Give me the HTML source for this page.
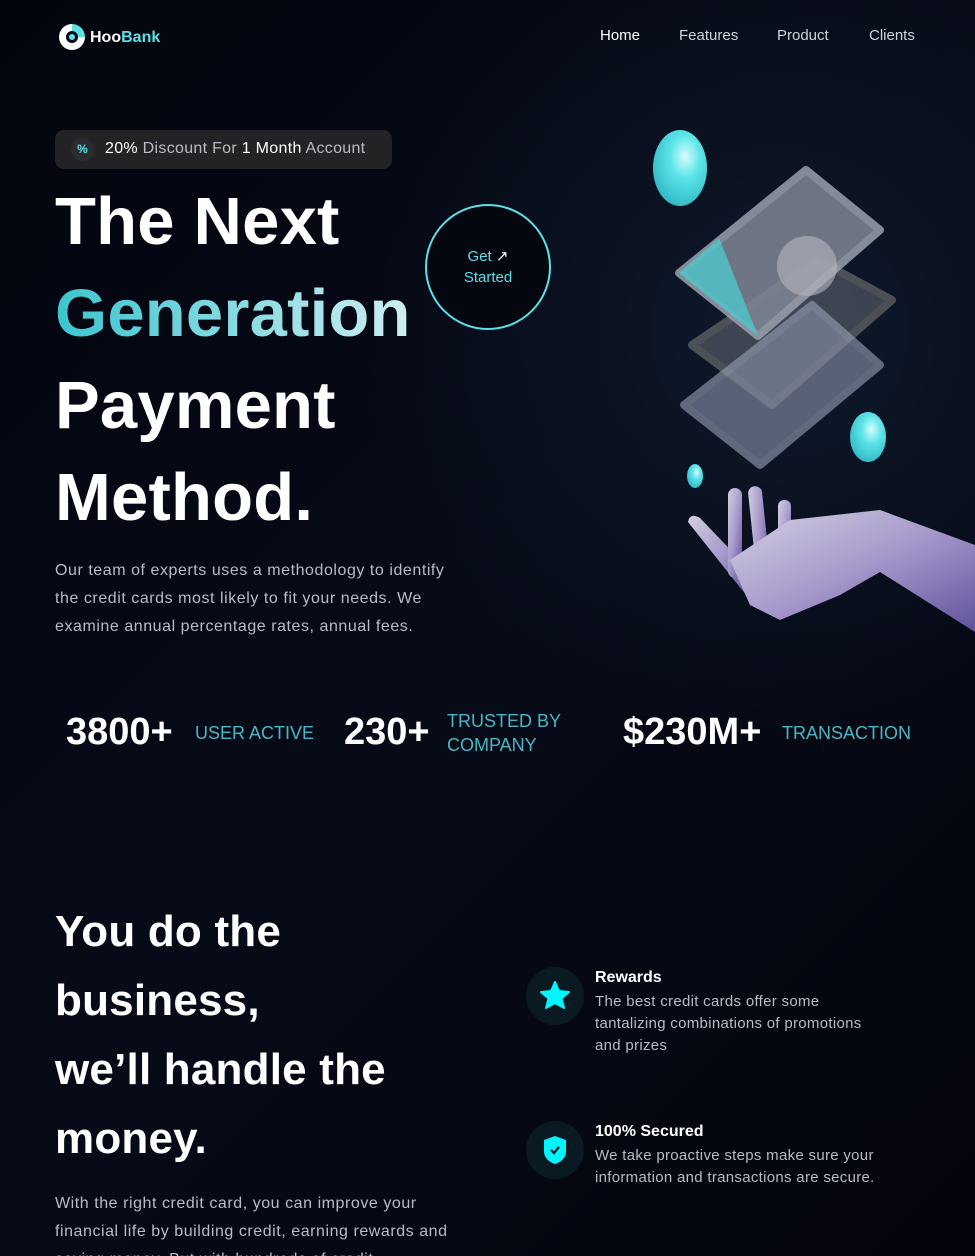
<!DOCTYPE html>
<html><head><meta charset="utf-8"><style>
*{margin:0;padding:0;box-sizing:border-box}
html{width:975px;height:1256px;overflow:hidden;background:#03050e}
body{width:975px;height:1256px;overflow:hidden;font-family:"Liberation Sans",sans-serif;color:#fff;
background:radial-gradient(ellipse 420px 420px at 780px 330px,#0f1a2c 0%,#0a1120 50%,rgba(3,6,18,0) 100%),linear-gradient(135deg,#03050e 0%,#070b18 50%,#03040c 100%);position:relative}
.a{position:absolute}
.nav a{position:absolute;top:27px;font-size:15px;color:#cfd3da;text-decoration:none}
.h1{font-weight:bold;font-size:67px;left:55px;letter-spacing:0.2px}
.grad{background:linear-gradient(90deg,#3bc5cf,#cfeff2);-webkit-background-clip:text;color:transparent}
p.t{color:#b9bcc4;font-size:16px;line-height:28px;letter-spacing:0.55px}
.num{font-weight:bold;font-size:38px;top:711px}
.lab{color:#4ab7c2;font-size:18px;line-height:24px}
.h2{font-weight:bold;font-size:44px;left:55px;line-height:69px;letter-spacing:0.2px}
.ic{width:58px;height:58px;border-radius:50%;background:#0a1a22;left:526px}
.ft{left:595px;font-weight:bold;font-size:16px}
.fd{left:595px;color:#b9bcc4;font-size:15px;line-height:22px;width:290px;letter-spacing:0.3px}
</style></head><body>
<svg class="a" style="left:57px;top:22px" width="30" height="28" viewBox="0 0 30 28">
<path d="M15 2 A13 13 0 1 0 28 15 L21 15 A6 6 0 1 1 15 9 Z" fill="#fff"/>
<path d="M15 2 A13 13 0 0 1 28 15 L21 15 A6 6 0 0 0 15 9Z" fill="#5ce1e6"/>
<circle cx="15" cy="15" r="3" fill="#5ce1e6"/></svg>
<div class="a" style="left:90px;top:29px;font-size:16px;font-weight:bold">Hoo<span style="color:#5ce1e6">Bank</span></div>
<div class="nav"><a style="left:600px;color:#fff">Home</a><a style="left:679px">Features</a><a style="left:777px">Product</a><a style="left:869px">Clients</a></div>

<div class="a" style="left:55px;top:130px;width:337px;height:39px;border-radius:9px;background:#232325"></div>
<div class="a" style="left:71px;top:138px;width:23px;height:23px;border-radius:50%;background:#2b2c30;color:#5ce1e6;font-size:12px;text-align:center;line-height:23px;font-weight:bold">%</div>
<div class="a" style="left:105px;top:140px;font-size:16px;color:#b9bcc4;letter-spacing:0.3px"><span style="color:#fff">20%</span> Discount For <span style="color:#fff">1 Month</span> Account</div>

<div class="a h1" style="top:183px">The Next</div>
<div class="a h1 grad" style="top:275px">Generation</div>
<div class="a h1" style="top:367px">Payment</div>
<div class="a h1" style="top:459px">Method.</div>

<div class="a" style="left:425px;top:204px;width:126px;height:126px;border-radius:50%;border:2px solid #5ce1e6;background:#04070f;text-align:center;padding-top:40px;font-size:15px;line-height:21px;color:#5ce1e6">Get <span style="color:#fff">↗</span><br>Started</div>

<p class="a t" style="left:55px;top:557px;width:425px">Our team of experts uses a methodology to identify<br>the credit cards most likely to fit your needs. We<br>examine annual percentage rates, annual fees.</p>

<svg class="a" style="left:620px;top:120px" width="355" height="520" viewBox="620 120 355 520">
<defs><radialGradient id="b" cx="0.6" cy="0.35" r="0.7"><stop offset="0" stop-color="#d8fbfb"/><stop offset="0.4" stop-color="#5ce5e8"/><stop offset="1" stop-color="#2fb7c4"/></radialGradient>
<linearGradient id="h" x1="0" y1="0" x2="1" y2="1"><stop offset="0" stop-color="#e8e6f4"/><stop offset="0.5" stop-color="#b8a8e0"/><stop offset="1" stop-color="#6a5aa8"/></linearGradient></defs>
<polygon points="818,260 892,300 772,405 692,345" fill="#5d636e" opacity="0.6" stroke="#777" stroke-linejoin="round" stroke-width="8"/>
<polygon points="806,170 880,230 758,336 679,273" fill="#7f8696" opacity="0.85" stroke="#9aa0ad" stroke-linejoin="round" stroke-width="8"/>
<polygon points="719,238 758,336 679,273" fill="#4fc7cc" opacity="0.8"/>
<polygon points="812,305 880,365 760,465 684,405" fill="#8a93ab" opacity="0.6" stroke="#9aa3b8" stroke-linejoin="round" stroke-width="8"/>
<circle cx="807" cy="266" r="30" fill="#b5b8c0" opacity="0.6"/>
<ellipse cx="680" cy="168" rx="27" ry="38" fill="url(#b)"/>
<ellipse cx="868" cy="437" rx="18" ry="25" fill="url(#b)"/>
<ellipse cx="695" cy="476" rx="8" ry="12" fill="url(#b)"/>
<g fill="url(#h)" opacity="0.9">
<path d="M688 522 Q690 512 700 518 L745 565 L750 600 Z"/>
<rect x="728" y="488" width="14" height="90" rx="7"/>
<rect x="752" y="486" width="14" height="92" rx="7" transform="rotate(-6 759 530)"/>
<rect x="778" y="500" width="13" height="80" rx="6"/>
<path d="M730 560 L790 520 L880 510 L975 545 L975 632 L880 572 L840 595 L780 620 L750 605 Z"/>
</g>
</svg>

<div class="a num" style="left:66px">3800+</div><div class="a lab" style="left:195px;top:721px">USER ACTIVE</div>
<div class="a num" style="left:344px">230+</div><div class="a lab" style="left:447px;top:709px">TRUSTED BY<br>COMPANY</div>
<div class="a num" style="left:623px">$230M+</div><div class="a lab" style="left:782px;top:721px">TRANSACTION</div>

<div class="a h2" style="top:897px">You do the<br>business,<br>we’ll handle the<br>money.</div>
<p class="a t" style="left:55px;top:1190px;width:400px">With the right credit card, you can improve your financial life by building credit, earning rewards and saving money. But with hundreds of credit</p>

<div class="a ic" style="top:967px"><svg width="58" height="58" viewBox="0 0 58 58"><path d="M29 15 L33 24 L43 25 L35.5 31.5 L38 41 L29 36 L20 41 L22.5 31.5 L15 25 L25 24Z" fill="#00f6ff" stroke="#00f6ff" stroke-linejoin="round" stroke-width="2"/></svg></div>
<div class="a ft" style="top:969px">Rewards</div>
<div class="a fd" style="top:991px">The best credit cards offer some tantalizing combinations of promotions and prizes</div>

<div class="a ic" style="top:1121px"><svg width="58" height="58" viewBox="0 0 58 58"><path d="M29 15 L40 19 L40 30 C40 37 35 41 29 43 C23 41 18 37 18 30 L18 19Z" fill="#00f6ff"/><path d="M25 29 L28 32 L33 26" stroke="#0a1a22" stroke-width="2.2" fill="none"/></svg></div>
<div class="a ft" style="top:1123px">100% Secured</div>
<div class="a fd" style="top:1145px;width:300px">We take proactive steps make sure your information and transactions are secure.</div>
</body></html>
